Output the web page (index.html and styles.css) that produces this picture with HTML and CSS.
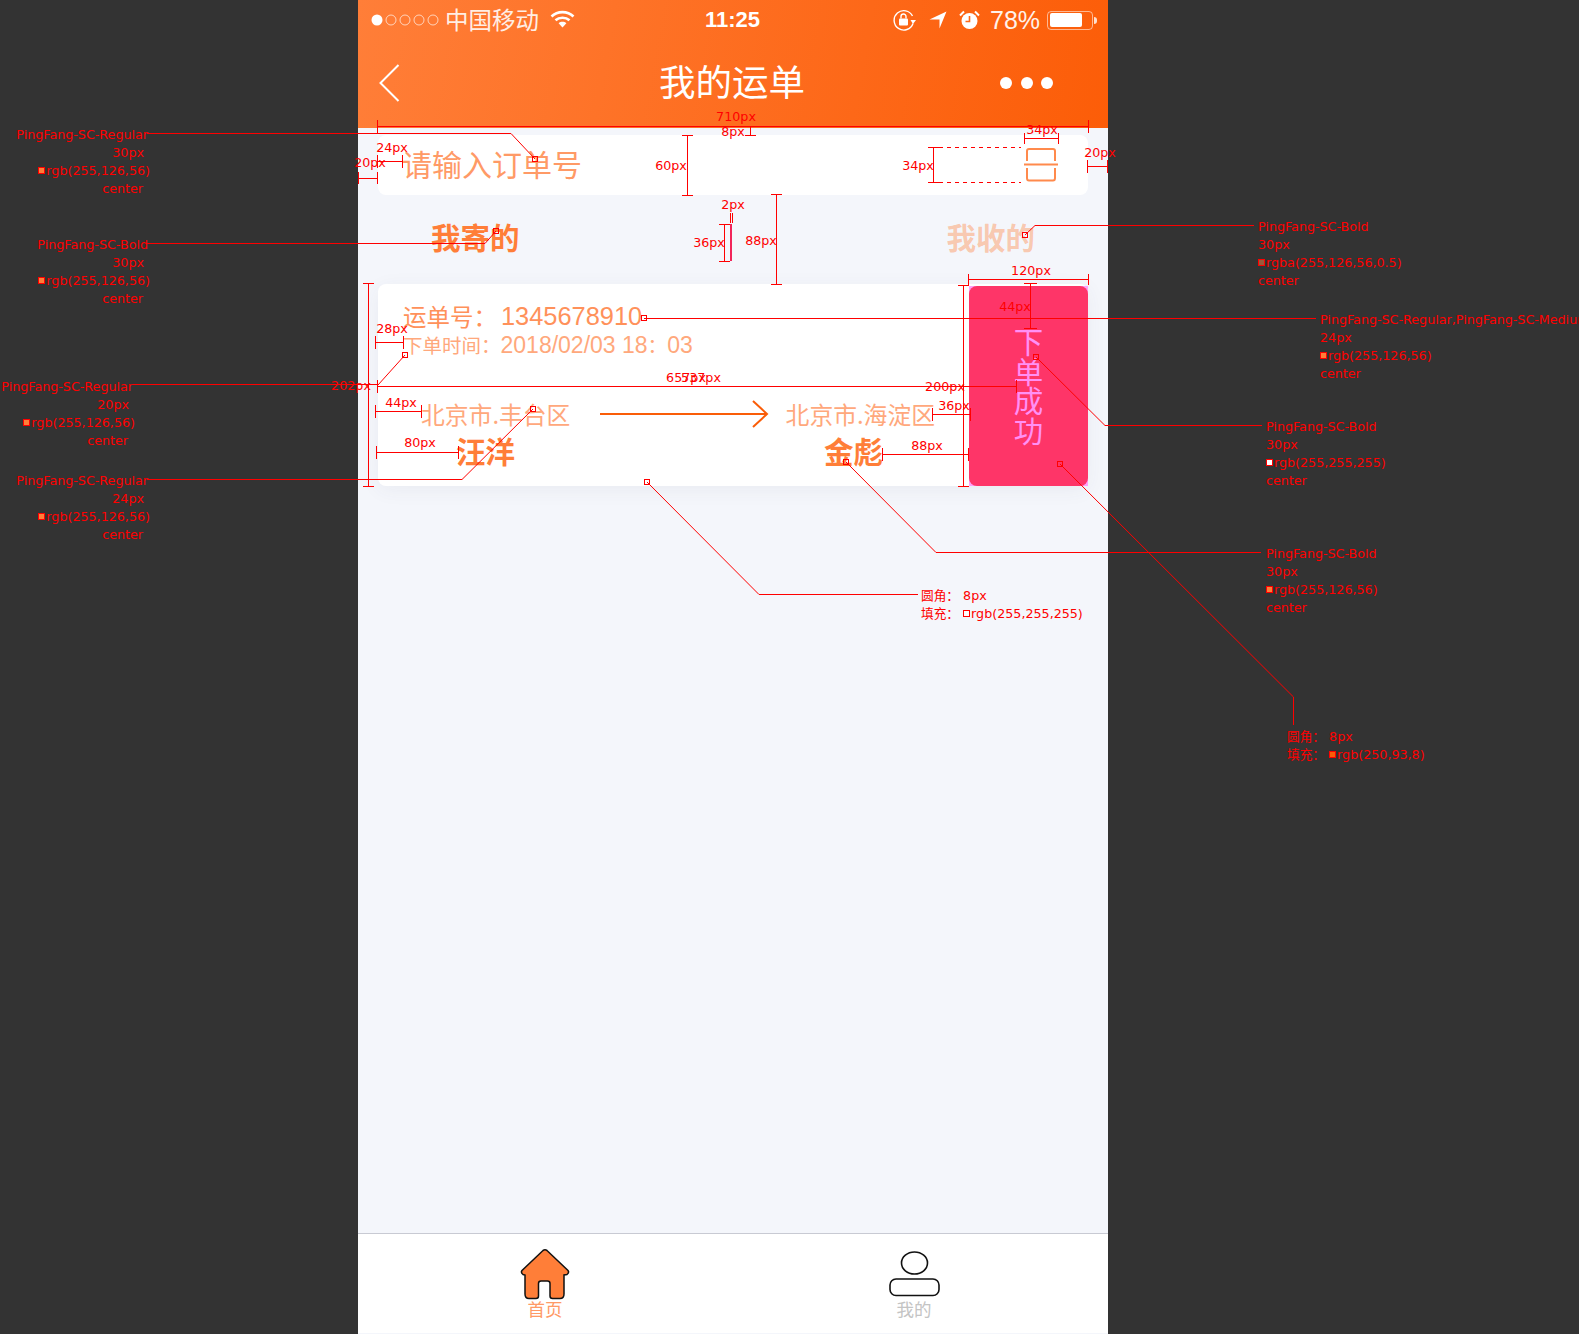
FILE: index.html
```html
<!DOCTYPE html>
<html lang="zh-CN">
<head>
<meta charset="utf-8">
<title>我的运单</title>
<link rel="stylesheet" href="styles.css">
</head>
<body>
<div class="phone">
  <header class="header">
    <div class="status">
      <svg class="signal" width="70" height="14" viewBox="0 0 70 14"><circle cx="7" cy="7" r="5.5" fill="#fff"/><g fill="none" stroke="#fff" stroke-opacity=".65"><circle cx="21" cy="7" r="5"/><circle cx="35" cy="7" r="5"/><circle cx="49" cy="7" r="5"/><circle cx="63" cy="7" r="5"/></g></svg>
      <span class="carrier">中国移动</span>
      <svg class="wifi" width="25" height="18" viewBox="0 0 25 18"><g fill="none" stroke="#fff" stroke-width="2.6"><path d="M1.5 6.5C7.5 .7 17.5 .7 23.5 6.5"/><path d="M5.5 10.3C9.3 6.8 15.7 6.8 19.5 10.3"/></g><path d="M8.6 13.2C10.8 11.3 14.2 11.3 16.4 13.2L12.5 17.5Z" fill="#fff"/></svg>
      <span class="time">11:25</span>
      <svg class="lock" width="24" height="22" viewBox="0 0 24 22"><path d="M20 14.5A9.7 9.7 0 1 1 19.5 7" fill="none" stroke="#fff" stroke-width="1.4"/><path d="M17.5 11H23L20 15Z" fill="#fff"/><rect x="6" y="9.5" width="9" height="7" rx="1" fill="#fff"/><path d="M8 9.5V7.5a2.5 2.5 0 0 1 5 0V9.5" fill="none" stroke="#fff" stroke-width="1.4"/></svg>
      <svg class="locate" width="18" height="18" viewBox="0 0 18 18"><path d="M17.5 .5L10.5 17.5V8.5H.5Z" fill="#fff"/></svg>
      <svg class="alarm" width="21" height="20" viewBox="0 0 21 20"><circle cx="10.5" cy="11" r="8" fill="#fff"/><path d="M10.5 6V11.5H6.5" fill="none" stroke="#fe6a18" stroke-width="1.6"/><path d="M1 5.5L5 1.5M20 5.5L16 1.5" stroke="#fff" stroke-width="2"/></svg>
      <span class="percent">78%</span>
      <div class="battery"><div class="battery-level"></div></div>
      <div class="battery-nub"></div>
    </div>
    <nav class="nav">
      <svg class="back" width="21" height="38" viewBox="0 0 21 38"><path d="M19.5 1L1.5 19L19.5 37" fill="none" stroke="#fff" stroke-width="2"/></svg>
      <h1 class="title">我的运单</h1>
      <div class="more"><i></i><i></i><i></i></div>
    </nav>
  </header>

  <div class="search">
    <span class="placeholder">请输入订单号</span>
    <svg class="scan" width="34" height="35" viewBox="0 0 34 35"><g fill="none" stroke="#ff8a4c" stroke-width="2"><path d="M3 14V4Q3 2 5 2H29Q31 2 31 4V14"/><path d="M3 21V31Q3 33.500 5 33.500H29Q31 33.500 31 31V21"/></g><path d="M0 17.500H34" stroke="#ff8a4c" stroke-width="2"/></svg>
  </div>

  <div class="tabs">
    <span class="tab tab-active">我寄的</span>
    <span class="tab tab-idle">我收的</span>
  </div>

  <section class="order">
    <div class="order-info">
      <div class="order-no">运单号：<span class="order-digits">1345678910</span></div>
      <div class="order-time">下单时间：<span class="time-digits">2018/02/03 18</span>：<span class="time-digits">03</span></div>
      <div class="route">
        <span>北京市.丰台区</span>
        <svg class="arrow" width="169" height="28" viewBox="0 0 169 28"><path d="M0 14H167M153 1L167 14L153 27" fill="none" stroke="#fa5d08" stroke-width="2"/></svg>
        <span>北京市.海淀区</span>
      </div>
      <div class="names">
        <span>汪洋</span>
        <span>金彪</span>
      </div>
    </div>
    <div class="action-wrap">
      <div class="action"><span>下</span><span>单</span><span>成</span><span>功</span></div>
    </div>
  </section>

  <div class="spacer"></div>

  <footer class="tabbar">
    <div class="tabbar-item tabbar-home">
      <svg width="50" height="51" viewBox="0 0 50 51"><path d="M23 1.500Q25 .2 27 1.500L48 21.500Q49.500 23.500 47 25.500L44 26V45Q44 49.500 40 49.500H32.500Q30 49.500 30 47V34.500Q30 32 27.500 32H21Q18.500 32 18.500 34.500V47Q18.500 49.500 16 49.500H9Q5 49.500 5 45V26L3 25.500Q.5 23.500 2 21.500Z" fill="#ff7e38" stroke="#111" stroke-width="1.500"/></svg>
      <span>首页</span>
    </div>
    <div class="tabbar-item tabbar-me">
      <svg width="51" height="51" viewBox="0 0 51 51"><g fill="none" stroke="#111" stroke-width="1.600"><ellipse cx="25.500" cy="14" rx="13" ry="11"/><rect x="1" y="30" width="49" height="16.500" rx="6"/></g></svg>
      <span>我的</span>
    </div>
  </footer>
</div>

<div class="annot">
  <svg class="annot-lines" width="1579" height="1334" viewBox="0 0 1579 1334">
    <g class="ln">
      <path d="M377 126.500H1089M377.500 120V133M1088.500 120V133"/>
      <path d="M750.500 126V135M745 135.500H756"/>
      <path d="M377 161.500H402M377.500 155V168M402.500 155V168"/>
      <path d="M358 178.500H378M358.500 172V184M377.500 172V184"/>
      <path d="M687.500 135V195M682 135.500H693M682 195.500H693"/>
      <path d="M1024 138.500H1058M1024.500 133V144M1058.500 133V144"/>
      <path d="M933.500 147V182M928 147.500H939M928 182.500H939"/>
      <path class="dash" d="M939 147.500H1021M939 182.500H1021"/>
      <path d="M1087 166.500H1108M1087.500 160V173M1107.500 160V173"/>
      <path d="M730.500 213V223M732.500 213V223"/>
      <path d="M724.500 224V261M719 224.500H730M719 261.500H730"/>
      <path class="thick" d="M731 224V261"/>
      <path d="M776.500 194V284M771 194.500H782M771 284.500H782"/>
      <path d="M968 279.500H1089M968.500 274V285M1088.500 274V285"/>
      <path d="M1030.500 283V328M1024 283.500H1037M1024 328.500H1037"/>
      <path d="M368.500 283V486M363 283.500H374M363 486.500H374"/>
      <path d="M963.500 285V486M958 285.500H969M958 486.500H969"/>
      <path d="M133 384.500H378"/>
      <path d="M377 386.500H1016M377.500 380V393M1016.500 380V393"/>
      <path d="M375 342.500H403M375.500 336V349M403.500 336V349"/>
      <path d="M375 411.500H421M375.500 405V418M421.500 405V418"/>
      <path d="M376 452.500H458M376.500 446V459M458.500 446V459"/>
      <path d="M932 414.500H970M932.500 408V421M970.500 408V421"/>
      <path d="M882 454.500H969M882.500 448V461M968.500 448V461"/>
      <path d="M147 133.500H511L535 159"/>
      <path d="M147 243.500H485L496 231"/>
      <path d="M1025 235L1035 225.500H1254"/>
      <path d="M644 318.500H1316"/>
      <path d="M405 355L378 385"/>
      <path d="M147 479.500H462L533 409"/>
      <path d="M846 462L936 552.500H1261"/>
      <path d="M647 482L759 594.500H918"/>
      <path d="M1036 357L1105 425.500H1262"/>
      <path d="M1060 464L1293.500 697V725"/>
      <rect x="532.500" y="156.500" width="5" height="5"/>
      <rect x="493.500" y="228.500" width="5" height="5"/>
      <rect x="1022.500" y="232.500" width="5" height="5"/>
      <rect x="641.500" y="315.500" width="5" height="5"/>
      <rect x="402.500" y="352.500" width="5" height="5"/>
      <rect x="530.500" y="406.500" width="5" height="5"/>
      <rect x="843.500" y="459.500" width="5" height="5"/>
      <rect x="644.500" y="479.500" width="5" height="5"/>
      <rect x="1033.500" y="354.500" width="5" height="5"/>
      <rect x="1057.500" y="461.500" width="5" height="5"/>
    </g>
  </svg>

  <span class="dim d710">710px</span>
  <span class="dim d8">8px</span>
  <span class="dim d34t">34px</span>
  <span class="dim d24">24px</span>
  <span class="dim d20l">20px</span>
  <span class="dim d60">60px</span>
  <span class="dim d34d">34px</span>
  <span class="dim d20r">20px</span>
  <span class="dim d2">2px</span>
  <span class="dim d36">36px</span>
  <span class="dim d88">88px</span>
  <span class="dim d120">120px</span>
  <span class="dim d44t">44px</span>
  <span class="dim d28">28px</span>
  <span class="dim d657">657px</span>
  <span class="dim d537">537px</span>
  <span class="dim d202">202px</span>
  <span class="dim d200">200px</span>
  <span class="dim d44l">44px</span>
  <span class="dim d36r">36px</span>
  <span class="dim d80">80px</span>
  <span class="dim d88b">88px</span>

  <div class="note note-right n-search"><p>PingFang-SC-Regular</p><p>30px</p><p><i class="sw sw-o"></i>rgb(255,126,56)</p><p>center</p></div>
  <div class="note note-right n-sent"><p>PingFang-SC-Bold</p><p>30px</p><p><i class="sw sw-o"></i>rgb(255,126,56)</p><p>center</p></div>
  <div class="note note-right n-time"><p>PingFang-SC-Regular</p><p>20px</p><p><i class="sw sw-o"></i>rgb(255,126,56)</p><p>center</p></div>
  <div class="note note-right n-city"><p>PingFang-SC-Regular</p><p>24px</p><p><i class="sw sw-o"></i>rgb(255,126,56)</p><p>center</p></div>
  <div class="note n-recv"><p>PingFang-SC-Bold</p><p>30px</p><p><i class="sw sw-h"></i>rgba(255,126,56,0.5)</p><p>center</p></div>
  <div class="note n-no"><p>PingFang-SC-Regular,PingFang-SC-Medium</p><p>24px</p><p><i class="sw sw-o"></i>rgb(255,126,56)</p><p>center</p></div>
  <div class="note n-btn"><p>PingFang-SC-Bold</p><p>30px</p><p><i class="sw sw-w"></i>rgb(255,255,255)</p><p>center</p></div>
  <div class="note n-name"><p>PingFang-SC-Bold</p><p>30px</p><p><i class="sw sw-o"></i>rgb(255,126,56)</p><p>center</p></div>
  <div class="note n-card"><p>圆角： 8px</p><p>填充： <i class="sw sw-w"></i>rgb(255,255,255)</p></div>
  <div class="note n-fill"><p>圆角： 8px</p><p>填充： <i class="sw sw-r"></i>rgb(250,93,8)</p></div>
</div>
</body>
</html>
```
FILE: styles.css
```css
* { box-sizing: border-box; }
html, body { margin: 0; height: 1334px; overflow: hidden; }
body { background: #333; position: relative; font-family: "Noto Sans CJK SC", "Noto Sans", sans-serif; }
p, h1 { margin: 0; font-weight: 400; }

.phone { width: 750px; height: 1334px; margin-left: 358px; background: #f4f6fb; display: flex; flex-direction: column; }

.header { height: 128px; background: linear-gradient(100deg, #ff7e38, #fc5d08); color: #fff; display: flex; flex-direction: column; }
.status { height: 40px; display: flex; align-items: center; padding-left: 12px; position: relative; }
.signal { margin-right: 5px; flex: none; }
.carrier { font-size: 23.500px; line-height: 40px; width: 94px; color: #ffeee4; margin-top: -2px; }
.wifi { margin-left: 11px; margin-top: -2px; }
.time { font: 700 22px/40px "Liberation Sans", sans-serif; margin-left: 130px; width: 58px; }
.lock { margin-left: 130px; }
.locate { margin-left: 12px; }
.alarm { margin-left: 12px; }
.percent { font: 400 25px/40px "Liberation Sans", sans-serif; margin-left: 10px; width: 50px; color: #fff2ea; }
.battery { width: 46px; height: 19px; margin-left: 7px; border: 1.500px solid rgba(255,255,255,.55); border-radius: 4px; padding: 1.500px; }
.battery-level { width: 32px; height: 100%; background: #fff; border-radius: 2px; }
.battery-nub { width: 3px; height: 7px; margin-left: 1px; background: rgba(255,255,255,.8); border-radius: 0 3px 3px 0; }

.nav { height: 88px; display: flex; align-items: center; padding: 0 55px 2px 21px; position: relative; }
.back { flex: none; margin-top: 0; }
.title { font-size: 36.500px; line-height: 48px; color: #fff; margin-left: 259px; margin-top: -5px; flex: 1; }
.more { display: flex; gap: 8.500px; }
.more i { width: 12px; height: 12px; border-radius: 50%; background: #fff; }

.search { height: 60px; margin: 7px 20px 0; background: #fff; border-radius: 8px; display: flex; align-items: center; justify-content: space-between; padding: 0 30px 0 24px; }
.placeholder { font-size: 30px; line-height: 40px; color: #ff9a66; margin-top: -4px; }
.scan { margin-top: -1px; }

.tabs { height: 89px; display: flex; justify-content: space-between; align-items: center; padding: 0 73px; }
.tab { font-size: 29.500px; font-weight: 700; line-height: 40px; margin-top: -7px; }
.tab-active { color: #ff7e38; }
.tab-idle { color: rgba(255,126,56,.4); }

.order { height: 202px; margin: 0 20px; background: #fff; border-radius: 8px; box-shadow: 0 4px 20px rgba(60,70,110,.06); display: flex; color: #ff915a; }
.order-info { flex: 1; display: flex; flex-direction: column; padding: 18px 0 0 25px; min-width: 0; }
.order-no { font-size: 23.500px; line-height: 28px; display: flex; align-items: center; }
.order-digits { font: 400 25.400px/28px "Liberation Sans", sans-serif; margin-left: 4px; }
.order-time { font-size: 19.500px; line-height: 30px; color: #ffa87c; display: flex; align-items: center; }
.time-digits { font: 400 23px/30px "Liberation Sans", sans-serif; white-space: pre; }
.route { margin-top: 39px; padding: 0 34px 0 18px; display: flex; justify-content: space-between; align-items: center; font-size: 23.800px; line-height: 30px; color: #ffa87c; }
.route .arrow { flex: none; margin: 0 -6px 0 6px; position: relative; top: 0; }
.names { margin-top: 6px; padding: 0 86px 0 53px; display: flex; justify-content: space-between; font-size: 29.500px; font-weight: 700; line-height: 30px; color: #ff7e38; }

.action-wrap { width: 119px; height: 200px; margin-top: 2px; background: #ffa0f8; flex: none; }
.action { height: 100%; border-radius: 8px; background: #fe3568; color: #ff90f5; display: flex; flex-direction: column; align-items: center; padding-top: 40px; font-size: 29.500px; line-height: 29.500px; }

.spacer { flex: 1; }

.tabbar { height: 100px; margin-bottom: 1px; background: #fff; border-top: 1px solid #c8cad3; display: flex; padding-top: 15px; }
.tabbar-item { width: 70px; display: flex; flex-direction: column; align-items: center; font-size: 17.500px; line-height: 20px; }
.tabbar-item svg { display: block; flex: none; }
.tabbar-item span { margin-top: -1px; }
.tabbar-home { margin-left: 152px; color: #ff9a66; }
.tabbar-me { margin-left: 299px; color: #c4c4c4; }

.annot { position: absolute; inset: 0; overflow: hidden; color: #f00; font: 12.700px/18px "DejaVu Sans", "Noto Sans CJK SC", sans-serif; }
.annot-lines { position: absolute; left: 0; top: 0; }
.ln { fill: none; stroke: #f00; stroke-width: 1; }
.ln .dash { stroke-dasharray: 4 4; }
.ln .thick { stroke: #f2255a; stroke-width: 2; }

.dim { position: absolute; transform: translate(-50%, -50%); white-space: nowrap; }
.d710 { left: 736px; top: 117px; }
.d8 { left: 733px; top: 132px; }
.d34t { left: 1042px; top: 130px; }
.d24 { left: 392px; top: 148px; }
.d20l { left: 370px; top: 163px; }
.d60 { left: 671px; top: 166px; }
.d34d { left: 918px; top: 166px; }
.d20r { left: 1100px; top: 153px; }
.d2 { left: 733px; top: 205px; }
.d36 { left: 709px; top: 243px; }
.d88 { left: 761px; top: 241px; }
.d120 { left: 1031px; top: 271px; }
.d44t { left: 1015px; top: 307px; }
.d28 { left: 392px; top: 329px; }
.d657 { left: 686px; top: 378px; }
.d537 { left: 701px; top: 378px; }
.d202 { left: 351px; top: 386px; }
.d200 { left: 945px; top: 387px; }
.d44l { left: 401px; top: 403px; }
.d36r { left: 954px; top: 406px; }
.d80 { left: 420px; top: 443px; }
.d88b { left: 927px; top: 446px; }

.note { position: absolute; white-space: nowrap; }
.note-right { text-align: right; }
.note-right p:nth-child(1) { padding-right: 2px; }
.note-right p:nth-child(2) { padding-right: 6px; }
.note-right p:nth-child(4) { padding-right: 7px; }
.n-search { right: 1429px; top: 126px; }
.n-sent { right: 1429px; top: 236px; }
.n-time { right: 1444px; top: 378px; }
.n-city { right: 1429px; top: 472px; }
.n-recv { left: 1258px; top: 218px; }
.n-no { left: 1320px; top: 311px; }
.n-btn { left: 1266px; top: 418px; }
.n-name { left: 1266px; top: 545px; }
.n-card { left: 921px; top: 587px; }
.n-fill { left: 1287px; top: 728px; }

.sw { display: inline-block; width: 7px; height: 7px; border: 1px solid #f00; margin-right: 1px; vertical-align: 1px; }
.sw-o { background: #ff7e38; }
.sw-h { background: #9a5a3a; }
.sw-w { background: #fff; }
.sw-r { background: #fa5d08; }
```
